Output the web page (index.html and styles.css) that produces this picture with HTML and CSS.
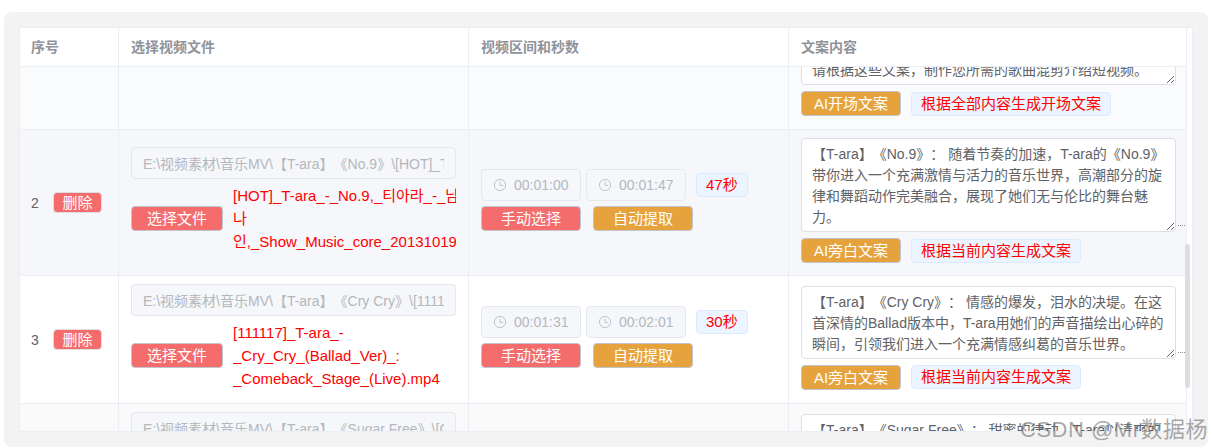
FILE: index.html
```html
<!DOCTYPE html>
<html>
<head>
    <title>视频文案</title>
    <meta charset="UTF-8">
    <meta name="viewport" content="width=device-width, initial-scale=1.0">
    <link rel="stylesheet" href="styles.css">
</head>
<body>
    <div class="panel">
        <div class="table-wrap">
            <table class="clip-table">
                <colgroup>
                    <col class="col-index">
                    <col class="col-file">
                    <col class="col-range">
                    <col class="col-copy">
                </colgroup>
                <thead>
                    <tr>
                        <th class="cell-index">序号</th>
                        <th>选择视频文件</th>
                        <th>视频区间和秒数</th>
                        <th>文案内容</th>
                    </tr>
                </thead>
                <tbody>
                    <tr class="row-cut">
                        <td class="cell-index"></td>
                        <td></td>
                        <td></td>
                        <td class="cell-copy">
                            <div class="cut-box">
                                <div class="copy-box">
                                    <textarea class="text-one" readonly>请根据这些文案，制作您所需的歌曲混剪介绍短视频。</textarea>
                                </div>
                                <div class="action-row">
                                    <button class="btn btn-orange">AI开场文案</button>
                                    <span class="tag">根据全部内容生成开场文案</span>
                                </div>
                            </div>
                        </td>
                    </tr>
                    <tr class="row-even">
                        <td class="cell-index">
                            <div class="index-box"><span class="index-num">2</span><button class="btn btn-red btn-del">删除</button></div>
                        </td>
                        <td>
                            <input class="path-input" disabled value="E:\视频素材\音乐MV\【T-ara】《No.9》\[HOT]_T-ara_-_No.9,_티아라_-_남나인,_Show_Music_core_20131019.mp4">
                            <div class="file-row">
                                <button class="btn btn-red btn-file">选择文件</button>
                                <div class="file-name">[HOT]_T-ara_-_No.9,_티아라_-_남<br>나<br>인,_Show_Music_core_20131019.mp4</div>
                            </div>
                        </td>
                        <td>
                            <div class="time-row">
                                <div class="time-input"><svg class="clock" viewBox="0 0 14 14"><circle cx="7" cy="7" r="5.6"/><path d="M7 3.6V7.4H10.2"/></svg>00:01:00</div>
                                <div class="time-input"><svg class="clock" viewBox="0 0 14 14"><circle cx="7" cy="7" r="5.6"/><path d="M7 3.6V7.4H10.2"/></svg>00:01:47</div>
                                <span class="tag tag-time">47秒</span>
                            </div>
                            <div class="action-row action-range">
                                <button class="btn btn-red">手动选择</button>
                                <button class="btn btn-orange">自动提取</button>
                            </div>
                        </td>
                        <td class="cell-copy">
                            <div class="copy-box">
                                <textarea class="text-four" readonly>【T-ara】《No.9》： 随着节奏的加速，T-ara的《No.9》带你进入一个充满激情与活力的音乐世界，高潮部分的旋律和舞蹈动作完美融合，展现了她们无与伦比的舞台魅力。</textarea>
                            </div>
                            <div class="action-row">
                                <button class="btn btn-orange">AI旁白文案</button>
                                <span class="tag">根据当前内容生成文案</span>
                            </div>
                        </td>
                    </tr>
                    <tr>
                        <td class="cell-index">
                            <div class="index-box"><span class="index-num">3</span><button class="btn btn-red btn-del">删除</button></div>
                        </td>
                        <td>
                            <input class="path-input" disabled value="E:\视频素材\音乐MV\【T-ara】《Cry Cry》\[111117]_T-ara_-_Cry_Cry_(Ballad_Ver)_:_Comeback_Stage_(Live).mp4">
                            <div class="file-row">
                                <button class="btn btn-red btn-file">选择文件</button>
                                <div class="file-name">[111117]_T-ara_-<br>_Cry_Cry_(Ballad_Ver)_:<br>_Comeback_Stage_(Live).mp4</div>
                            </div>
                        </td>
                        <td>
                            <div class="time-row">
                                <div class="time-input"><svg class="clock" viewBox="0 0 14 14"><circle cx="7" cy="7" r="5.6"/><path d="M7 3.6V7.4H10.2"/></svg>00:01:31</div>
                                <div class="time-input"><svg class="clock" viewBox="0 0 14 14"><circle cx="7" cy="7" r="5.6"/><path d="M7 3.6V7.4H10.2"/></svg>00:02:01</div>
                                <span class="tag tag-time">30秒</span>
                            </div>
                            <div class="action-row action-range">
                                <button class="btn btn-red">手动选择</button>
                                <button class="btn btn-orange">自动提取</button>
                            </div>
                        </td>
                        <td class="cell-copy">
                            <div class="copy-box">
                                <textarea class="text-three" readonly>【T-ara】《Cry Cry》： 情感的爆发，泪水的决堤。在这首深情的Ballad版本中，T-ara用她们的声音描绘出心碎的瞬间，引领我们进入一个充满情感纠葛的音乐世界。</textarea>
                            </div>
                            <div class="action-row">
                                <button class="btn btn-orange">AI旁白文案</button>
                                <span class="tag">根据当前内容生成文案</span>
                            </div>
                        </td>
                    </tr>
                    <tr class="row-last">
                        <td class="cell-index"></td>
                        <td>
                            <input class="path-input" disabled value="E:\视频素材\音乐MV\【T-ara】《Sugar Free》\[Comeback_Stage]_T-ara_-_Sugar_Free.mp4">
                        </td>
                        <td></td>
                        <td class="cell-copy">
                            <div class="copy-box">
                                <textarea class="text-three" readonly>【T-ara】《Sugar Free》： 甜蜜的律动，T-ara以清爽的节奏展开全新的舞台。</textarea>
                            </div>
                        </td>
                    </tr>
                </tbody>
            </table>
            <div class="scroll-thumb"></div>
        </div>
    </div>
    <div class="watermark">CSDN @Mr数据杨</div>
</body>
</html>
```

FILE: styles.css
```css
body {
    margin: 0;
    height: 448px;
    overflow: hidden;
    background: #fff;
    font-family: "Liberation Sans", "Noto Sans CJK SC", sans-serif;
    font-size: 14px;
    color: #606266;
    text-spacing-trim: space-all;
}
.panel {
    margin: 12px 4px 0;
    padding: 15px;
    background: #f3f3f3;
    border-radius: 8px;
}
.table-wrap {
    position: relative;
    height: 405px;
    box-sizing: border-box;
    border: 1px solid #ebeef5;
    background: #fff;
    overflow: hidden;
}
.clip-table {
    width: 1167px;
    table-layout: fixed;
    border-collapse: separate;
    border-spacing: 0;
}
.col-index { width: 99px; }
.col-file { width: 350px; }
.col-range { width: 320px; }
.col-copy { width: 398px; }
th {
    height: 39px;
    box-sizing: border-box;
    padding: 0 12px 3px;
    text-align: left;
    font-weight: bold;
    color: #909399;
    background: #fff;
    border-right: 1px solid #ebeef5;
    border-bottom: 1px solid #ebeef5;
}
td {
    padding: 8px 12px;
    vertical-align: middle;
    border-right: 1px solid #ebeef5;
    border-bottom: 1px solid #ebeef5;
}
th.cell-index,
td.cell-index { padding-left: 11px; }
td.cell-copy { padding-right: 10px; }
.row-cut td {
    padding-top: 0;
    padding-bottom: 0;
    height: 62px;
    background: #fafbfd;
}
.row-even td { background: #f5f7fa; }
.row-last td { background: #fafafa; vertical-align: top; }
.row-last .copy-box { margin-top: 2px; }
.cut-box {
    height: 62px;
    padding-bottom: 9px;
    box-sizing: border-box;
    display: flex;
    flex-direction: column;
    justify-content: flex-end;
    overflow: hidden;
}
.index-box {
    display: flex;
    align-items: center;
    gap: 14px;
}
.index-num { width: 8px; }
.btn {
    width: 100px;
    height: 25px;
    padding: 0;
    font-family: inherit;
    font-size: 15px;
    line-height: 23px;
    color: #fff;
    border: 1px solid #c0c4cc;
    border-radius: 4px;
}
.btn-red { background: #f56c6c; }
.btn-orange { background: #e6a23c; }
.btn-del {
    width: 49px;
    height: 21px;
    line-height: 19px;
    border-color: #dcdfe6;
}
.btn-file {
    width: 92px;
    flex-shrink: 0;
}
.path-input {
    display: block;
    width: 100%;
    height: 32px;
    box-sizing: border-box;
    padding: 0 11px;
    font-family: inherit;
    font-size: 14px;
    color: #b4b7bd;
    background: #f5f7fa;
    border: 1px solid #e4e7ed;
    border-radius: 4px;
    text-spacing-trim: space-all;
}
.file-row {
    display: flex;
    align-items: center;
    gap: 10px;
    margin: 5px 0;
}
.file-name {
    flex: 1;
    min-width: 0;
    overflow: hidden;
    white-space: nowrap;
    font-size: 15px;
    line-height: 23px;
    color: #f00;
}
.time-row {
    display: flex;
    align-items: center;
    gap: 5px;
}
.time-input {
    width: 100px;
    height: 32px;
    box-sizing: border-box;
    padding-left: 11px;
    display: flex;
    align-items: center;
    gap: 7px;
    color: #b4b7bd;
    background: #f5f7fa;
    border: 1px solid #e4e7ed;
    border-radius: 4px;
}
.clock {
    width: 14px;
    height: 14px;
    fill: none;
    stroke: #c0c4cc;
    stroke-width: 1;
}
.tag {
    display: inline-block;
    height: 24px;
    box-sizing: border-box;
    padding: 0 9px;
    font-size: 15px;
    line-height: 22px;
    color: #f00;
    background: #ecf5ff;
    border: 1px solid #d9ecff;
    border-radius: 4px;
}
.tag-time { margin-left: 5px; }
.action-row {
    display: flex;
    align-items: center;
    gap: 10px;
    margin: 6px 0 4px;
}
.action-range {
    gap: 12px;
    margin: 5px 0;
}
.copy-box {
    position: relative;
}
.copy-box::after {
    content: "";
    position: absolute;
    right: -9px;
    bottom: 6px;
    width: 7px;
    border-top: 1px dotted #8a8f99;
}
textarea {
    display: block;
    width: 100%;
    box-sizing: border-box;
    padding: 5px 10px;
    font-family: inherit;
    font-size: 14px;
    line-height: 21px;
    color: #606266;
    background: #fff;
    border: 1px solid #dcdfe6;
    border-radius: 4px;
    outline: none;
    overflow: hidden;
    text-spacing-trim: space-all;
}
.text-one { height: 31px; }
.text-three { height: 73px; }
.text-four { height: 94px; }
.scroll-thumb {
    position: absolute;
    top: 216px;
    right: 2px;
    width: 5px;
    height: 144px;
    background: #dcdee0;
    border-radius: 3px;
}
.watermark {
    position: absolute;
    top: 415px;
    right: 4px;
    font-size: 22px;
    line-height: 30px;
    letter-spacing: 0.5px;
    color: rgba(110, 110, 110, 0.6);
    white-space: nowrap;
}
```
